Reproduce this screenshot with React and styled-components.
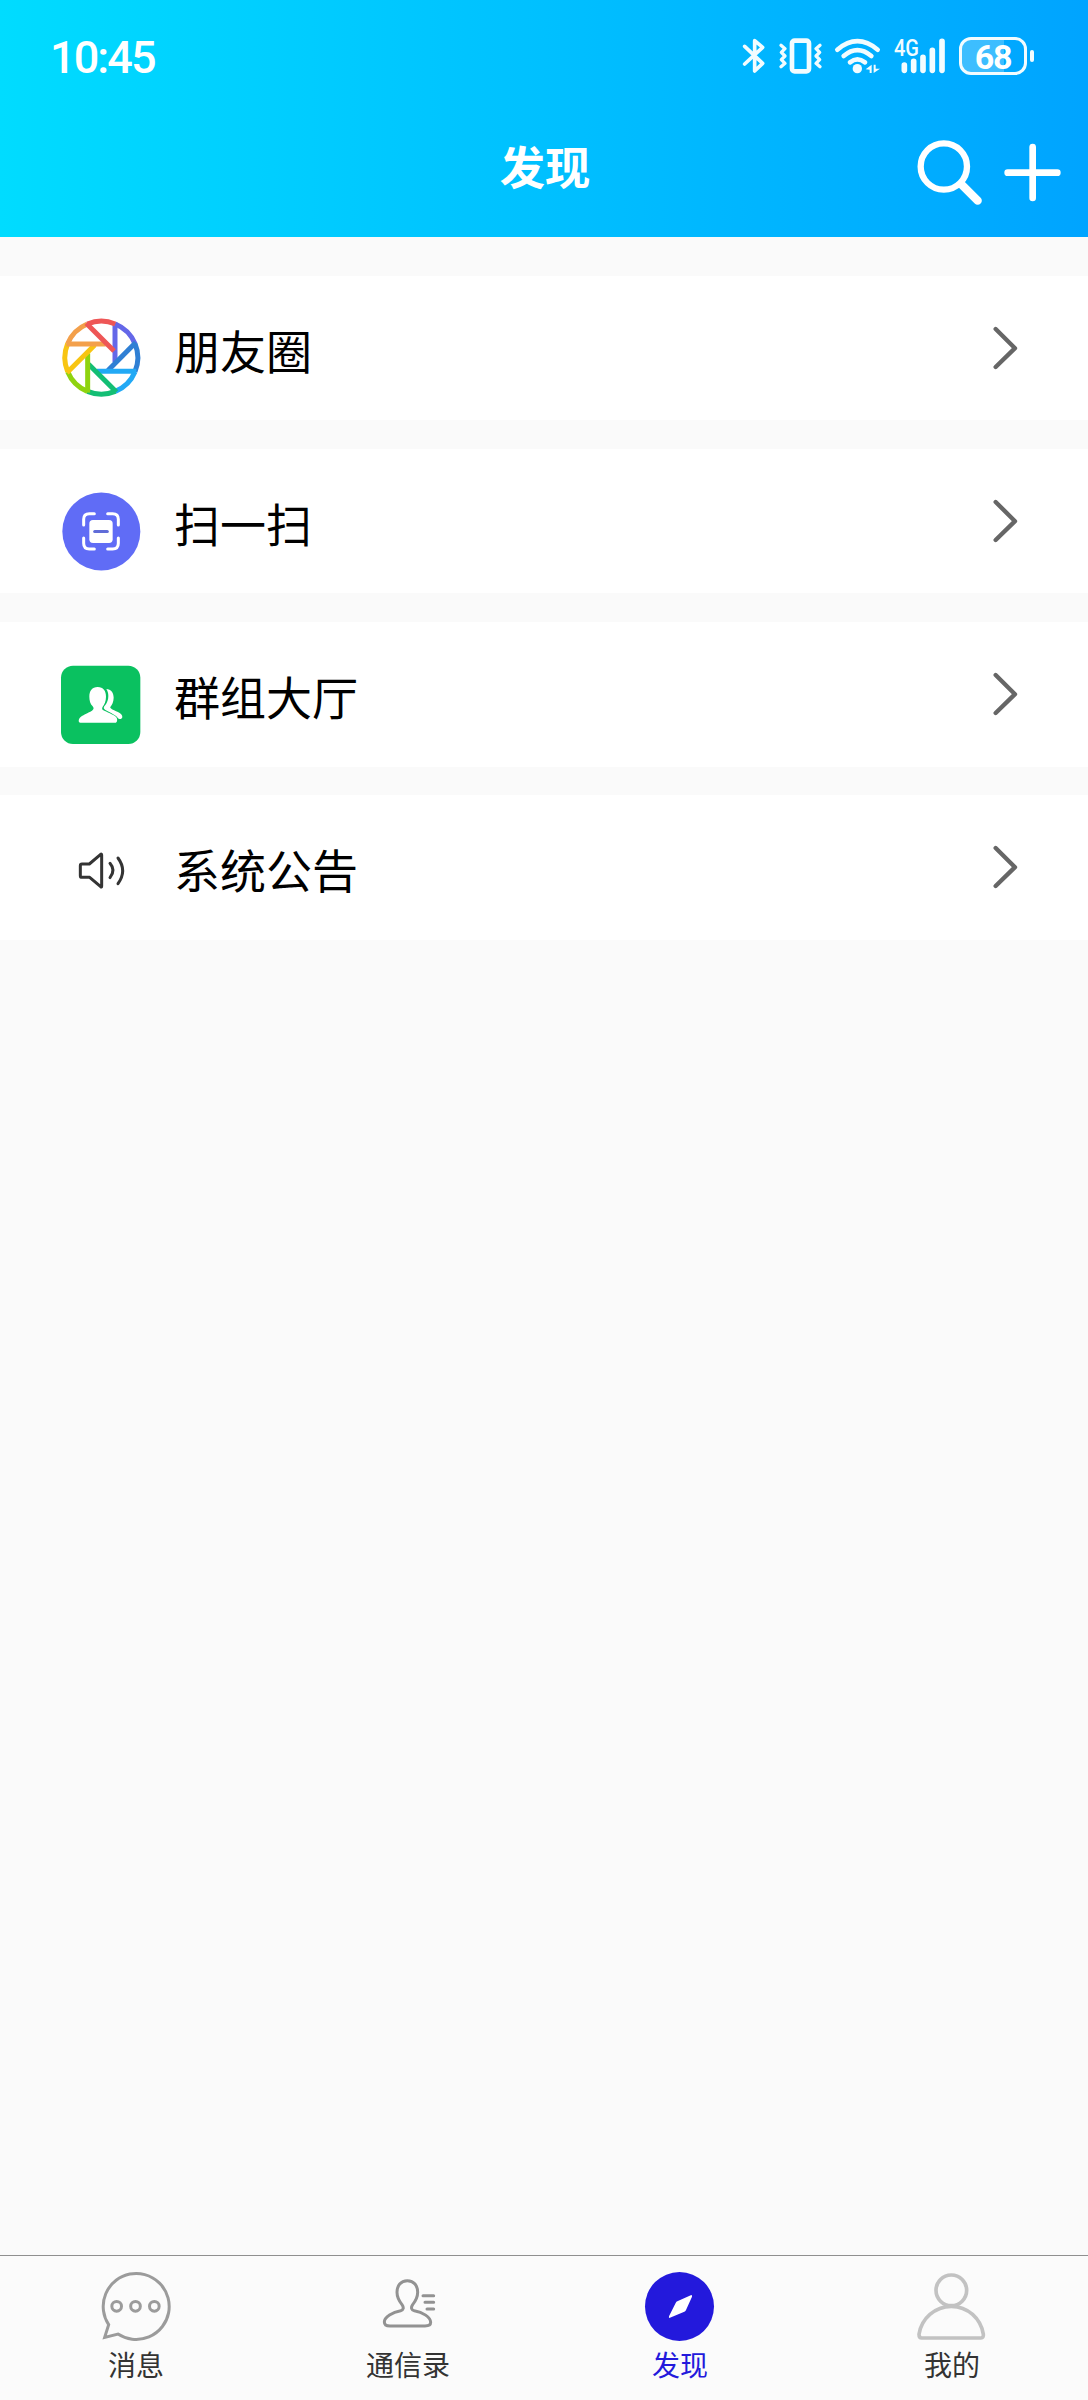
import React from "react";
import styled, { createGlobalStyle } from "styled-components";

const GlobalStyle = createGlobalStyle`
  *, *::before, *::after { box-sizing: border-box; }
  body {
    margin: 0;
    background: #fafafa;
    font-family: "Noto Sans CJK SC", "Noto Sans", sans-serif;
  }
`;

const Screen = styled.div`
  display: flex;
  flex-direction: column;
  width: 1088px;
  height: 2400px;
  background: #fafafa;
`;

const Header = styled.header`
  flex: none;
  height: 237px;
  padding-top: 36px;
  color: #fff;
  background: linear-gradient(90deg, #00dcff 0%, #00a4ff 100%);
`;

const StatusBar = styled.div`
  display: flex;
  align-items: center;
  justify-content: space-between;
  height: 40px;
  padding: 0 53px 0 50px;
`;

const Clock = styled.span`
  padding-top: 3px;
  font: 500 45px/40px Roboto, sans-serif;
  letter-spacing: -1.9px;
`;

const StatusIcons = styled.div`
  display: flex;
  gap: 11px;
`;

const Glyph = styled.svg`
  display: block;
  flex: none;
  width: ${(p) => p.$w}px;
  height: ${(p) => p.$h}px;
  overflow: visible;
`;

const Battery = styled.div`
  display: flex;
  align-items: center;
  gap: 3px;
  width: 77px;
  padding-left: 1px;
`;

const BatteryCell = styled.div`
  width: 68px;
  height: 38px;
  border: 3px solid #f2fcff;
  border-radius: 12px;
  background: linear-gradient(90deg, rgba(255, 255, 255, 0.24) 68%, transparent 68%);
  font: 700 34px/34px Roboto, sans-serif;
  letter-spacing: -1.2px;
  text-align: center;
`;

const BatteryTip = styled.div`
  width: 4px;
  height: 12px;
  border-radius: 2px;
  background: #f2fcff;
`;

const TitleBar = styled.div`
  display: grid;
  grid-template-columns: 1fr auto 1fr;
  align-items: center;
  height: 120px;
  padding: 0 27px;
  margin-top: 34px;
`;

const Title = styled.h1`
  grid-column: 2;
  align-self: start;
  margin: 23px 0 0 2px;
  font-size: 45.3px;
  line-height: 64px;
  font-weight: 700;
`;

const Actions = styled.div`
  display: flex;
  align-self: start;
  justify-self: end;
  gap: 20px;
  margin-top: 28px;
`;

const Menu = styled.main`
  display: flex;
  flex: 1;
  flex-direction: column;
  gap: 28.75px;
  padding-top: 39px;
`;

const MenuRow = styled.div`
  display: flex;
  flex: none;
  align-items: center;
  height: 144.35px;
  padding: 0 68px 0 60px;
  background: #fff;
`;

const IconSlot = styled.div`
  align-self: flex-start;
  margin-top: 41px;
`;

const MenuLabel = styled.span`
  flex: 1;
  margin-left: 32px;
  padding-top: 1px;
  color: #000;
  font-size: 46px;
  line-height: 66px;
`;

const TabBar = styled.nav`
  display: grid;
  flex: none;
  grid-template-columns: repeat(4, 1fr);
  height: 145px;
  border-top: 1px solid #8f8f8f;
  background: #fbfbfb;
`;

const Tab = styled.div`
  display: flex;
  flex-direction: column;
  align-items: center;
  padding-top: 14px;
  color: ${(p) => (p.$active ? "#2319dc" : "#333")};
`;

const TabLabel = styled.span`
  margin-top: 2px;
  font-size: 28px;
  line-height: 40px;
`;

const BluetoothIcon = () => (
  <Glyph $w={26} $h={40} viewBox="60 48 78 120" fill="none" stroke="#f2fcff" strokeWidth="11" strokeLinecap="round" strokeLinejoin="round">
    <path d="M71 79 L125 130 L101 153 V62 L125 82 L71 132" />
  </Glyph>
);

const VibrateIcon = () => (
  <Glyph $w={45} $h={40} viewBox="171 48 135 120" fill="none" stroke="#f2fcff" strokeLinecap="round" strokeLinejoin="round">
    <rect x="213" y="62" width="51" height="92" rx="8" strokeWidth="14" />
    <path d="M180 76 L192 86 L181 97 L192 108 L181 119 L192 130 L180 140" strokeWidth="10" />
    <path d="M297 76 L285 86 L296 97 L285 108 L296 119 L285 130 L297 140" strokeWidth="10" />
  </Glyph>
);

const WifiIcon = () => (
  <Glyph $w={48} $h={40} viewBox="342 48 144 120" fill="none" stroke="#f2fcff" strokeWidth="14" strokeLinecap="round">
    <path d="M352 89 Q412 38 473 89" />
    <path d="M371 108 Q412 73 454 108" />
    <path d="M390 127 Q412 109 435 127" />
    <circle cx="412" cy="146" r="14" fill="#f2fcff" stroke="none" />
    <path d="M437 148 L455 134 V159 H449 V149 Z M461 159 V134 H467 V146 H480 Z" fill="#f2fcff" stroke="none" />
  </Glyph>
);

const SignalIcon = () => (
  <Glyph $w={54} $h={40} viewBox="519 48 162 120" fill="none" stroke="#f2fcff" strokeWidth="17" strokeLinecap="round">
    <path d="M553 135 V151 M581 124 V151 M609 112 V151 M637 91 V151 M666 64 V151" />
    <text x="522" y="108" fill="#f2fcff" stroke="none" fontFamily="Roboto, sans-serif" fontWeight="500" fontSize="69" textLength="75" lengthAdjust="spacingAndGlyphs">4G</text>
  </Glyph>
);

const SearchIcon = () => (
  <Glyph $w={68} $h={68} viewBox="102 84 204 204" fill="none" stroke="#fff" strokeLinecap="round">
    <circle cx="185.500" cy="169.500" r="69.500" strokeWidth="19" />
    <path d="M239 224 L287 272" strokeWidth="25" />
  </Glyph>
);

const PlusIcon = () => (
  <Glyph $w={57} $h={68} viewBox="368 84 171 204" fill="none" stroke="#fff" strokeWidth="20" strokeLinecap="round">
    <path d="M454 111 V264 M379 188 H528" />
  </Glyph>
);

const blades = ["#6467e8", "#2f7fd4", "#22a9f5", "#13be74", "#8fd30f", "#f8c512", "#f3a04b", "#ee5656"];

const MomentsIcon = () => (
  <Glyph $w={82} $h={82} viewBox="-124 -122 246 246" fill="none" strokeWidth="15">
    {blades.map((color, i) => (
      <g key={color} stroke={color} transform={`rotate(${i * 45})`}>
        <path d="M42 -101 A109.500 109.500 0 0 1 101 -42" />
        <path d="M41 -105 V13" />
      </g>
    ))}
  </Glyph>
);

const ScanIcon = () => (
  <Glyph $w={82} $h={82} viewBox="60 60 246 246" fill="none" strokeLinecap="round">
    <circle cx="184" cy="184.500" r="117" fill="#606cf6" />
    <path
      d="M131 165 V148 Q131 131 148 131 H163 M203 131 H218 Q235 131 235 148 V165 M235 204 V220 Q235 237 218 237 H203 M163 237 H148 Q131 237 131 220 V204"
      stroke="#fff"
      strokeWidth="9"
    />
    <rect x="148" y="150" width="70" height="69" rx="11" fill="#fff" />
    <path d="M164 184.500 H202" stroke="#606cd8" strokeWidth="9" />
  </Glyph>
);

const GroupIcon = () => (
  <Glyph $w={82} $h={82} viewBox="60 69 246 246">
    <rect x="63" y="77" width="238" height="235" rx="36" fill="#0ac160" />
    <path
      d="M173 141 C190 141 198 153 198 170 C198 184 193 194 188 200 C185 206 186 209 193 212 C207 219 225 225 230 233 C233 240 231 248 226 248 H121 C115 248 115 239 119 234 C126 225 143 220 156 212 C162 208 162 204 158 199 C151 192 148 182 148 170 C148 153 156 141 173 141 Z"
      fill="#fff"
    />
    <path
      d="M199 147 C213 147 221 159 221 173 C221 185 216 195 211 201 C207 207 235 214 243 222 C250 230 247 238 239 237 C234 237 233 232 228 228 C220 221 205 215 195 209 C189 205 191 200 196 195 C201 188 205 180 205 168 C205 159 203 153 199 147 Z"
      fill="#fff"
    />
  </Glyph>
);

const SpeakerIcon = () => (
  <Glyph $w={82} $h={82} viewBox="60 168 246 246" fill="none" stroke="#343434" strokeWidth="9" strokeLinecap="round" strokeLinejoin="round">
    <path d="M126 252 H148 L182 223 Q185 221 185 225 V319 Q185 323 182 320 L149 292 H126 Q121 292 121 287 V257 Q121 252 126 252 Z" />
    <path d="M210 250 Q228 271 210 293 M234 234 Q262 272 234 311" />
  </Glyph>
);

const ChevronIcon = () => (
  <Glyph $w={28} $h={46} viewBox="96 192 84 138" fill="none" stroke="#666" strokeWidth="13" strokeLinecap="round" strokeLinejoin="round">
    <path d="M107 204 L165 261.500 L107 318" />
  </Glyph>
);

const ChatIcon = () => (
  <Glyph $w={72} $h={72} viewBox="120 90 216 216" fill="none" stroke="#9b9b9b" strokeWidth="9">
    <path d="M146 254 A99 99 0 1 1 174 282 L134 292 Z" strokeLinejoin="miter" />
    <circle cx="170" cy="199" r="14.500" />
    <circle cx="226.500" cy="199" r="14.500" />
    <circle cx="283" cy="199" r="14.500" />
  </Glyph>
);

const ContactsIcon = () => (
  <Glyph $w={72} $h={72} viewBox="936 90 216 216" fill="none" stroke="#929292" strokeWidth="9" strokeLinecap="round" strokeLinejoin="round">
    <path d="M1042 122 C1062 122 1073 137 1073 157 C1073 174 1066 184 1058 194 C1052 203 1054 210 1063 212 C1088 216 1112 232 1112 247 C1112 255 1106 258 1095 258 H990 C977 258 973 254 973 246 C973 231 998 216 1022 212 C1031 210 1032 203 1026 194 C1018 184 1011 174 1011 157 C1011 137 1022 122 1042 122 Z" />
    <path d="M1089 167 H1121 M1095 187 H1121 M1101 207 H1121" />
  </Glyph>
);

const CompassIcon = () => (
  <Glyph $w={72} $h={72} viewBox="132 90 216 216">
    <circle cx="238.500" cy="199.500" r="103.500" fill="#2319dc" />
    <path d="M274 165 Q277 165 276 170 L258 210 Q257 213 253 215 L208 234 Q206 234 207 229 L227 189 Q229 185 232 184 Z" fill="#fff" />
  </Glyph>
);

const ProfileIcon = () => (
  <Glyph $w={72} $h={72} viewBox="948 90 216 216" fill="none" stroke="#c2c2c2" strokeWidth="11" strokeLinejoin="round">
    <circle cx="1054" cy="151" r="46" />
    <path d="M1054 199 C1103 199 1143 236 1150 283 Q1151 294 1143 294 H965 Q957 294 957 283 C964 236 1005 199 1054 199 Z" />
  </Glyph>
);

const menu = [
  { label: "朋友圈", Icon: MomentsIcon },
  { label: "扫一扫", Icon: ScanIcon },
  { label: "群组大厅", Icon: GroupIcon },
  { label: "系统公告", Icon: SpeakerIcon },
];

const tabs = [
  { label: "消息", Icon: ChatIcon },
  { label: "通信录", Icon: ContactsIcon },
  { label: "发现", Icon: CompassIcon, active: true },
  { label: "我的", Icon: ProfileIcon },
];

export default function App() {
  return (
    <Screen>
      <GlobalStyle />
      <Header>
        <StatusBar>
          <Clock>10:45</Clock>
          <StatusIcons>
            <BluetoothIcon />
            <VibrateIcon />
            <WifiIcon />
            <SignalIcon />
            <Battery>
              <BatteryCell>68</BatteryCell>
              <BatteryTip />
            </Battery>
          </StatusIcons>
        </StatusBar>
        <TitleBar>
          <Title>发现</Title>
          <Actions>
            <SearchIcon />
            <PlusIcon />
          </Actions>
        </TitleBar>
      </Header>
      <Menu>
        {menu.map(({ label, Icon }) => (
          <MenuRow key={label}>
            <IconSlot>
              <Icon />
            </IconSlot>
            <MenuLabel>{label}</MenuLabel>
            <ChevronIcon />
          </MenuRow>
        ))}
      </Menu>
      <TabBar>
        {tabs.map(({ label, Icon, active }) => (
          <Tab key={label} $active={active}>
            <Icon />
            <TabLabel>{label}</TabLabel>
          </Tab>
        ))}
      </TabBar>
    </Screen>
  );
}
